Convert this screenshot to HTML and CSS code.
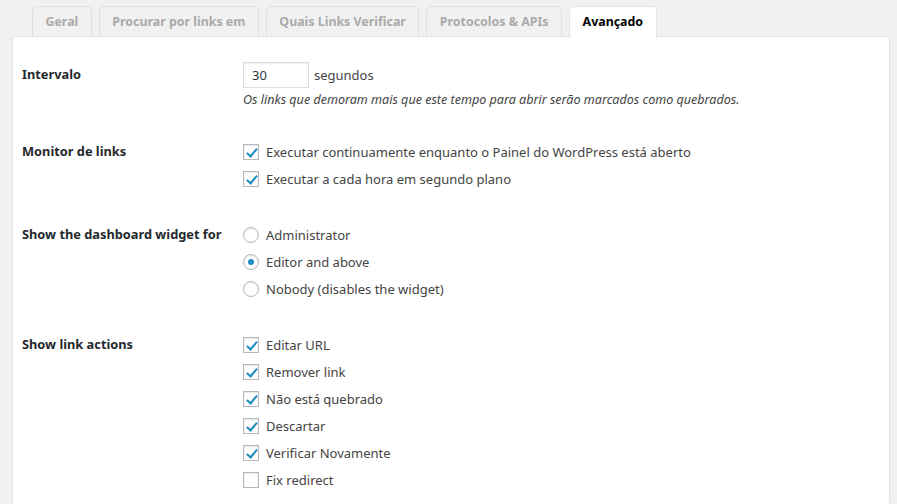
FILE: index.html
```html
<!DOCTYPE html>
<html lang="pt-BR">
<head>
    <meta charset="UTF-8">
    <meta name="viewport" content="width=device-width, initial-scale=1.0">
    <title>Configurações - Avançado</title>
    <link rel="stylesheet" href="styles.css">
</head>
<body>
    <div class="wrap">
        <nav class="tabs">
            <a class="tab" href="#">Geral</a>
            <a class="tab" href="#">Procurar por links em</a>
            <a class="tab" href="#">Quais Links Verificar</a>
            <a class="tab" href="#">Protocolos &amp; APIs</a>
            <a class="tab active" href="#">Avançado</a>
        </nav>

        <div class="panel">
            <div class="row">
                <div class="label">Intervalo</div>
                <div class="field">
                    <div class="item">
                        <input class="num" type="text" value="30">
                        <span>segundos</span>
                    </div>
                    <p class="desc">Os links que demoram mais que este tempo para abrir serão marcados como quebrados.</p>
                </div>
            </div>

            <div class="row">
                <div class="label">Monitor de links</div>
                <div class="field">
                    <label class="item"><span class="box checked"></span>Executar continuamente enquanto o Painel do WordPress está aberto</label>
                    <label class="item"><span class="box checked"></span>Executar a cada hora em segundo plano</label>
                </div>
            </div>

            <div class="row">
                <div class="label">Show the dashboard widget for</div>
                <div class="field">
                    <label class="item"><span class="radio"></span>Administrator</label>
                    <label class="item"><span class="radio checked"></span>Editor and above</label>
                    <label class="item"><span class="radio"></span>Nobody (disables the widget)</label>
                </div>
            </div>

            <div class="row last">
                <div class="label">Show link actions</div>
                <div class="field">
                    <label class="item"><span class="box checked"></span>Editar URL</label>
                    <label class="item"><span class="box checked"></span>Remover link</label>
                    <label class="item"><span class="box checked"></span>Não está quebrado</label>
                    <label class="item"><span class="box checked"></span>Descartar</label>
                    <label class="item"><span class="box checked"></span>Verificar Novamente</label>
                    <label class="item"><span class="box"></span>Fix redirect</label>
                </div>
            </div>
        </div>
    </div>
</body>
</html>
```

FILE: styles.css
```css
body {
    margin: 0;
    background-color: #f1f1f1;
    font-family: "Noto Sans", "Open Sans", sans-serif;
    font-size: 13px;
    color: #444;
}

.wrap {
    padding: 6px 7px 0 12px;
}

/* Tabs */
.tabs {
    display: flex;
    gap: 7px;
    padding-left: 20px;
    height: 30px;
    position: relative;
    z-index: 1;
}

.tab {
    display: block;
    height: 29px;
    line-height: 29px;
    padding: 0 12.5px;
    border: 1px solid #e0e0e0;
    border-bottom: none;
    border-radius: 5px 5px 0 0;
    background-color: #f1f1f1;
    color: #aaa;
    font-size: 12.4px;
    font-weight: bold;
    text-decoration: none;
}

.tab.active {
    background-color: #fff;
    color: #000;
    height: 31px;
    border-color: #e5e5e5;
}

/* Panel */
.panel {
    background-color: #fff;
    border: 1px solid #e5e5e5;
    border-radius: 4px;
    padding: 10px 9px 0;
}

.row {
    display: flex;
    padding: 14px 0 15px;
}

.row.last {
    padding-bottom: 12px;
}

.label {
    width: 221px;
    flex-shrink: 0;
    line-height: 27px;
    font-size: 12.8px;
    font-weight: bold;
    color: #23282d;
}

.item {
    display: flex;
    align-items: center;
    height: 27px;
}

.num {
    width: 66px;
    height: 26px;
    box-sizing: border-box;
    border: 1px solid #ddd;
    padding: 0 8px;
    font-family: inherit;
    font-size: 13px;
    color: #32373c;
    margin-right: 5px;
    box-shadow: inset 0 1px 2px rgba(0, 0, 0, 0.07);
}

.desc {
    margin: 3px 0 0;
    line-height: 18px;
    font-size: 12.55px;
    font-style: italic;
}

/* Checkboxes and radios */
.box, .radio {
    width: 16px;
    height: 16px;
    box-sizing: border-box;
    border: 1px solid #b4b9be;
    background-color: #fff;
    margin-right: 7px;
    position: relative;
    box-shadow: inset 0 1px 2px rgba(0, 0, 0, 0.1);
    flex-shrink: 0;
}

.box.checked::after {
    content: "";
    position: absolute;
    left: 5px;
    top: 1px;
    width: 4px;
    height: 9px;
    border: solid #1e8cbe;
    border-width: 0 2.5px 2.5px 0;
    transform: rotate(40deg);
}

.radio {
    border-radius: 50%;
}

.radio.checked::after {
    content: "";
    position: absolute;
    left: 4px;
    top: 4px;
    width: 6px;
    height: 6px;
    border-radius: 50%;
    background-color: #1e8cbe;
}
```
